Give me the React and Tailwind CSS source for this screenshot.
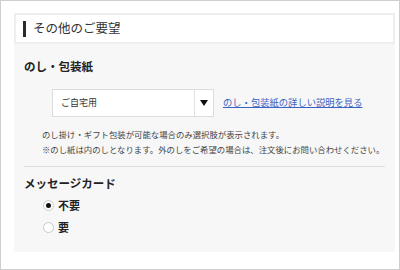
const JP = { fontFamily: '"Noto Sans CJK JP", "Noto Sans", sans-serif' };

function Radio({ checked, label }) {
  return (
    <label className="flex items-center h-[22px]">
      <span className="w-[11px] h-[11px] rounded-full border border-[#c9c9c9] bg-white flex items-center justify-center">
        {checked && <span className="w-[5px] h-[5px] rounded-full bg-[#111]" />}
      </span>
      <span className="ml-[4px] text-[11px] font-bold text-[#222] leading-none">{label}</span>
    </label>
  );
}

export default function App() {
  return (
    <div
      className="w-[400px] h-[270px] border border-[#cfcfcf] bg-white overflow-hidden pl-[13px] pr-[4px] pt-[12px]"
      style={JP}
    >
      <div className="h-[31px] border-2 border-[#eeeeee] bg-white flex items-center">
        <span className="w-[3px] h-[16px] bg-[#2b2b2b] ml-[7px]" />
        <span className="ml-[7px] text-[12.5px] text-[#333] leading-none">その他のご要望</span>
      </div>

      <div className="bg-[#f7f7f7] px-[10px] pt-[15px] pb-[14px]">
        <h2 className="text-[11.5px] font-bold text-[#222] leading-[14px]">のし・包装紙</h2>

        <div className="flex items-center mt-[16px] ml-[28px]">
          <div className="w-[162px] h-[28px] bg-white border border-[#dcdcdc] flex">
            <div className="flex-1 flex items-center pl-[8px] text-[9px] text-[#333]">ご自宅用</div>
            <div className="w-[19px] border-l border-[#e2e2e2] flex items-center justify-center">
              <svg width="8" height="6" viewBox="0 0 8 6">
                <path d="M0 0 H8 L4 6 Z" fill="#111" />
              </svg>
            </div>
          </div>
          <a className="ml-[9px] text-[9.3px] text-[#3a62c4] underline leading-none">
            のし・包装紙の詳しい説明を見る
          </a>
        </div>

        <div className="mt-[10px] ml-[18px] text-[8.4px] text-[#444] leading-[15px]">
          <p>のし掛け・ギフト包装が可能な場合のみ選択肢が表示されます。</p>
          <p>※のし紙は内のしとなります。外のしをご希望の場合は、注文後にお問い合わせください。</p>
        </div>

        <div className="mt-[9px] border-t border-[#dedede]" />

        <h2 className="mt-[9px] text-[11.5px] font-bold text-[#222] leading-[14px]">メッセージカード</h2>

        <div className="mt-[4px] ml-[19px] flex flex-col">
          <Radio checked label="不要" />
          <Radio label="要" />
        </div>
      </div>
    </div>
  );
}
